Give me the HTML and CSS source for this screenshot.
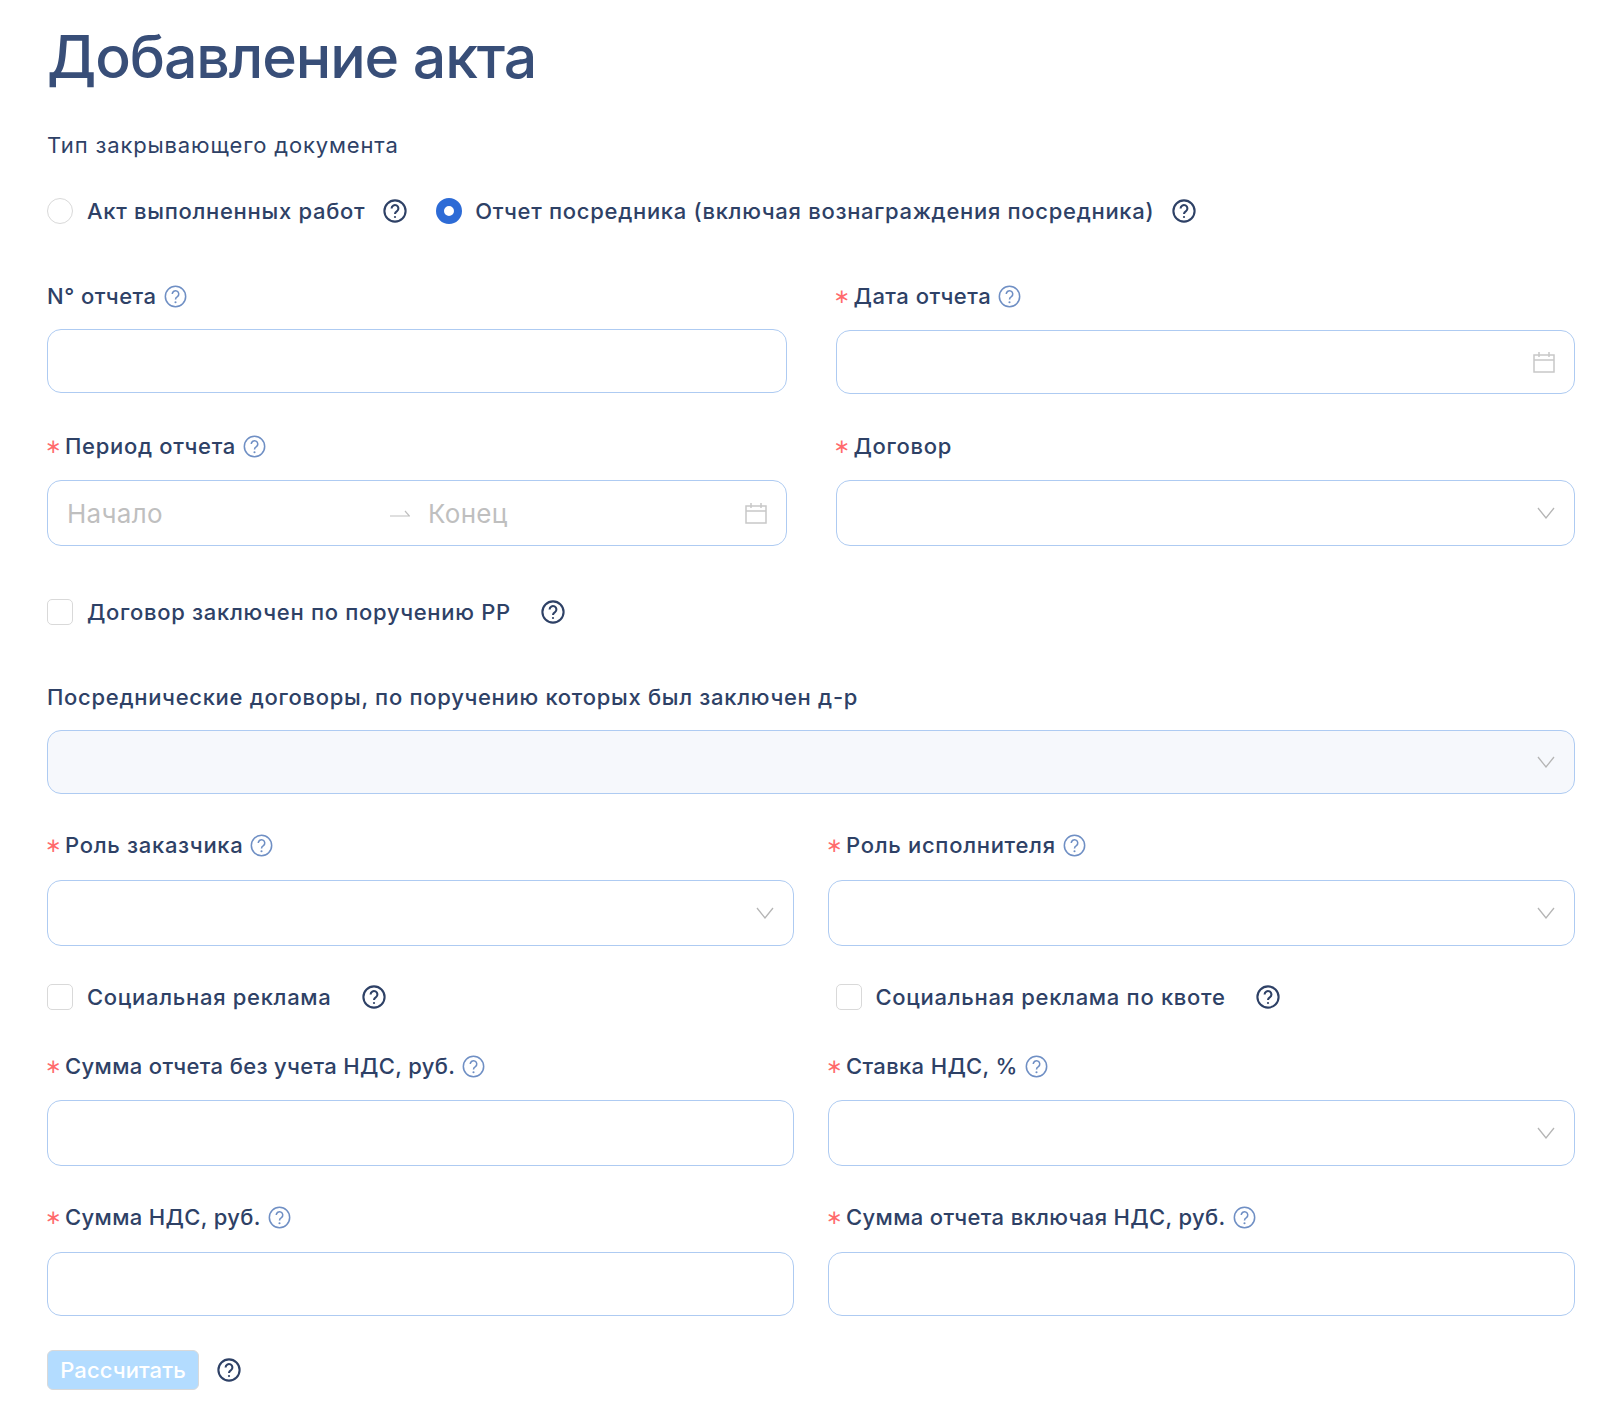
FILE: index.html
```html
<!DOCTYPE html>
<html lang="ru">
<head>
    <meta charset="UTF-8">
    <meta name="viewport" content="width=device-width, initial-scale=1.0">
    <title>Добавление акта</title>
    <link rel="stylesheet" href="styles.css">
</head>
<body>
    <svg class="sprite" width="0" height="0">
        <symbol id="help" viewBox="0 0 24 24">
            <circle cx="12" cy="12" r="10.6" fill="none" stroke="currentColor"/>
            <path d="M8.6 9.4a3.4 3.4 0 1 1 5.4 2.8c-1.2.8-2 1.5-2 2.9" fill="none" stroke="currentColor"/>
            <circle cx="12" cy="18" r="1.1" fill="currentColor"/>
        </symbol>
        <symbol id="calendar" viewBox="0 0 22 22">
            <path d="M1 4h20v17H1zM1 9h20M6 1v5M16 1v5" fill="none" stroke="currentColor" stroke-width="1.5"/>
        </symbol>
        <symbol id="chevron" viewBox="0 0 18 12">
            <path d="M1 1l8 10 8-10" fill="none" stroke="currentColor" stroke-width="1.3"/>
        </symbol>
        <symbol id="arrow" viewBox="0 0 20 8">
            <path d="M0 7h19.5L15 2" fill="none" stroke="currentColor" stroke-width="1.2"/>
        </symbol>
    </svg>

    <div class="page">
        <h1>Добавление акта</h1>

        <div class="section-label">Тип закрывающего документа</div>

        <div class="radio-row">
            <span class="radio"></span>
            <span class="option-text">Акт выполненных работ</span>
            <svg class="help-dark"><use href="#help"/></svg>
            <span class="radio checked"></span>
            <span class="option-text">Отчет посредника (включая вознаграждения посредника)</span>
            <svg class="help-dark"><use href="#help"/></svg>
        </div>

        <div class="form-row wide-gap row-number">
            <div class="field">
                <label>N° отчета <svg class="help"><use href="#help"/></svg></label>
                <div class="input"></div>
            </div>
            <div class="field">
                <label><span class="req">∗</span>Дата отчета <svg class="help"><use href="#help"/></svg></label>
                <div class="input shifted"><svg class="calendar"><use href="#calendar"/></svg></div>
            </div>
        </div>

        <div class="form-row wide-gap row-period">
            <div class="field">
                <label><span class="req">∗</span>Период отчета <svg class="help"><use href="#help"/></svg></label>
                <div class="input tall range">
                    <span class="placeholder start">Начало</span>
                    <svg class="arrow"><use href="#arrow"/></svg>
                    <span class="placeholder end">Конец</span>
                    <svg class="calendar"><use href="#calendar"/></svg>
                </div>
            </div>
            <div class="field">
                <label><span class="req">∗</span>Договор</label>
                <div class="input tall"><svg class="chevron"><use href="#chevron"/></svg></div>
            </div>
        </div>

        <div class="check-row single">
            <span class="checkbox"></span>
            <span class="option-text">Договор заключен по поручению РР</span>
            <svg class="help-dark"><use href="#help"/></svg>
        </div>

        <div class="field full">
            <label>Посреднические договоры, по поручению которых был заключен д-р</label>
            <div class="input disabled"><svg class="chevron"><use href="#chevron"/></svg></div>
        </div>

        <div class="form-row row-role">
            <div class="field">
                <label><span class="req">∗</span>Роль заказчика <svg class="help"><use href="#help"/></svg></label>
                <div class="input tall"><svg class="chevron"><use href="#chevron"/></svg></div>
            </div>
            <div class="field">
                <label><span class="req">∗</span>Роль исполнителя <svg class="help"><use href="#help"/></svg></label>
                <div class="input tall"><svg class="chevron"><use href="#chevron"/></svg></div>
            </div>
        </div>

        <div class="check-pair">
            <div class="check-row">
                <span class="checkbox"></span>
                <span class="option-text">Социальная реклама</span>
                <svg class="help-dark"><use href="#help"/></svg>
            </div>
            <div class="check-row">
                <span class="checkbox"></span>
                <span class="option-text">Социальная реклама по квоте</span>
                <svg class="help-dark"><use href="#help"/></svg>
            </div>
        </div>

        <div class="form-row row-sum">
            <div class="field">
                <label><span class="req">∗</span>Сумма отчета без учета НДС, руб. <svg class="help"><use href="#help"/></svg></label>
                <div class="input tall"></div>
            </div>
            <div class="field">
                <label><span class="req">∗</span>Ставка НДС, % <svg class="help"><use href="#help"/></svg></label>
                <div class="input tall"><svg class="chevron"><use href="#chevron"/></svg></div>
            </div>
        </div>

        <div class="form-row row-total">
            <div class="field">
                <label><span class="req">∗</span>Сумма НДС, руб. <svg class="help"><use href="#help"/></svg></label>
                <div class="input"></div>
            </div>
            <div class="field">
                <label><span class="req">∗</span>Сумма отчета включая НДС, руб. <svg class="help"><use href="#help"/></svg></label>
                <div class="input"></div>
            </div>
        </div>

        <div class="actions">
            <button type="button" class="calc-btn">Рассчитать</button>
            <svg class="help-dark"><use href="#help"/></svg>
        </div>
    </div>
</body>
</html>
```

FILE: styles.css
```css
body {
    margin: 0;
    font-family: 'Inter', 'Noto Sans', sans-serif;
    color: #2e4166;
    background: white;
}

.sprite {
    position: absolute;
}

.page {
    padding: 24px 39px 0 47px;
}

h1 {
    margin: 0;
    font-size: 59px;
    line-height: 66px;
    font-weight: 500;
    letter-spacing: -1.1px;
    color: #384e78;
}

.section-label {
    margin-top: 41px;
    font-size: 22px;
    line-height: 28px;
    letter-spacing: 0.85px;
}

.radio-row {
    display: flex;
    align-items: center;
    height: 30px;
    margin-top: 37px;
}

.radio {
    width: 26px;
    height: 26px;
    box-sizing: border-box;
    border: 1px solid #d9d9d9;
    border-radius: 50%;
    margin-right: 14px;
}

.radio.checked {
    border: 8px solid #2d6bd6;
    margin-left: 29px;
    margin-right: 13px;
}

.option-text {
    font-size: 22px;
    line-height: 28px;
    font-weight: 500;
    letter-spacing: 0.7px;
}

.help-dark {
    width: 24px;
    height: 24px;
    margin-left: 18px;
    color: #2e4166;
    stroke-width: 2.1;
}

.form-row {
    display: grid;
    grid-template-columns: 1fr 1fr;
    gap: 34px;
}

.form-row.wide-gap {
    gap: 49px;
}

.row-number {
    margin-top: 55px;
}

.row-period {
    margin-top: 37px;
}

.row-role {
    margin-top: 36px;
}

.row-sum {
    margin-top: 39px;
}

.row-total {
    margin-top: 36px;
}

label {
    display: flex;
    align-items: center;
    height: 30px;
    font-size: 22px;
    font-weight: 500;
    letter-spacing: 0.7px;
}

.row-number label {
    letter-spacing: 0.5px;
}

.row-sum label,
.row-total label {
    letter-spacing: 0.35px;
}

.help {
    width: 23px;
    height: 23px;
    margin-left: 7px;
    color: #6f8fc4;
    stroke-width: 1.6;
}

.req {
    color: #ff6a6c;
    width: 20px;
    margin-left: -2px;
    font-family: 'DejaVu Sans', sans-serif;
    font-size: 20px;
    font-weight: 400;
    letter-spacing: 0;
}

.input {
    display: flex;
    align-items: center;
    justify-content: flex-end;
    height: 64px;
    margin-top: 18px;
    padding: 0 19px;
    box-sizing: border-box;
    background: white;
    border: 1.5px solid #aecbf2;
    border-radius: 14px;
}

.input.tall {
    height: 66px;
}

.input.shifted {
    margin-top: 19px;
}

.row-period .input,
.row-sum .input {
    margin-top: 19px;
}

.row-role .input,
.row-total .input {
    margin-top: 20px;
}

.input.disabled {
    background: #f6f8fc;
}

.input.range {
    justify-content: flex-start;
}

.placeholder {
    font-size: 26px;
    letter-spacing: 0.3px;
    color: #bfbfbf;
}

.placeholder.start {
    width: 323px;
}

.placeholder.end {
    flex: 1;
    margin-left: 18px;
}

.arrow {
    width: 20px;
    height: 8px;
    color: #bfbfbf;
}

.calendar {
    width: 22px;
    height: 22px;
    color: #c8c8c8;
}

.chevron {
    width: 18px;
    height: 12px;
    color: #b5b5b5;
}

.check-row {
    display: flex;
    align-items: center;
    height: 30px;
}

.check-row.single {
    margin-top: 51px;
}

.checkbox {
    width: 26px;
    height: 26px;
    box-sizing: border-box;
    border: 1px solid #d9d9d9;
    border-radius: 5px;
    margin-right: 14px;
}

.check-row .help-dark {
    margin-left: 30px;
}

.field.full {
    margin-top: 55px;
}

.check-pair {
    display: grid;
    grid-template-columns: 1fr 1fr;
    gap: 49px;
    margin-top: 36px;
}

.actions {
    display: flex;
    align-items: center;
    margin-top: 34px;
}

.actions .help-dark {
    margin-left: 18px;
}

.calc-btn {
    width: 152px;
    height: 40px;
    border: 1px solid #d9d9d9;
    border-radius: 6px;
    background: #b3dcff;
    color: white;
    font-family: inherit;
    font-size: 22px;
    font-weight: 500;
    letter-spacing: 0.1px;
    padding: 0;
}
```
